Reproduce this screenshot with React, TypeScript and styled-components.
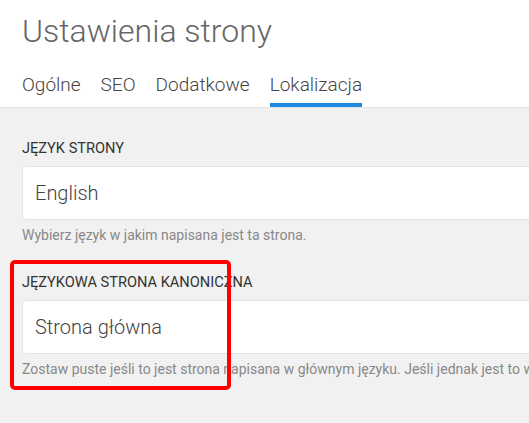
import styled, { createGlobalStyle } from "styled-components";

const GlobalStyle = createGlobalStyle`
  html, body {
    margin: 0;
    padding: 0;
    background: #f1f1f1;
    font-family: Roboto, "Liberation Sans", Arial, sans-serif;
    overflow: hidden;
  }
`;

const Page = styled.div`
  width: 529px;
  height: 423px;
  background: #f1f1f1;
  position: relative;
  overflow: hidden;
`;

const Header = styled.header`
  background: #fff;
  padding: 12px 22px 0;
  border-bottom: 1px solid #e2e2e2;
`;

const Title = styled.h1`
  margin: 0;
  font-size: 32px;
  line-height: 38px;
  font-weight: 300;
  color: #666;
`;

const Tabs = styled.nav`
  display: flex;
  gap: 20px;
  margin-top: 23px;
`;

const Tab = styled.span<{ active?: boolean }>`
  font-size: 19px;
  font-weight: 300;
  color: #444;
  line-height: 24px;
  padding-bottom: 6px;
  border-bottom: 4px solid ${({ active }) => (active ? "#1e88e5" : "transparent")};
`;

const Body = styled.main`
  padding: 31px 22px 0;
  display: flex;
  flex-direction: column;
  gap: 29px;
`;

const Field = styled.div`
  display: flex;
  flex-direction: column;
`;

const Label = styled.label`
  font-size: 14.6px;
  line-height: 18px;
  color: #333;
  text-transform: uppercase;
  margin-bottom: 9px;
`;

const Input = styled.div`
  height: 52px;
  width: 560px;
  box-sizing: content-box;
  background: #fff;
  border: 1px solid #e4e4e4;
  border-radius: 3px;
  display: flex;
  align-items: center;
  padding: 0 12px;
  font-size: 20px;
  font-weight: 300;
  color: #444;
`;

const Help = styled.p`
  margin: 7px 0 0;
  font-size: 14px;
  line-height: 17px;
  color: #888;
  white-space: nowrap;
`;

const Highlight = styled.div`
  position: absolute;
  left: 10px;
  top: 260px;
  width: 213px;
  height: 122px;
  border: 4px solid #ff0000;
  border-radius: 5px;
  pointer-events: none;
`;

export default function App() {
  return (
    <Page>
      <GlobalStyle />
      <Header>
        <Title>Ustawienia strony</Title>
        <Tabs>
          <Tab>Ogólne</Tab>
          <Tab>SEO</Tab>
          <Tab>Dodatkowe</Tab>
          <Tab active>Lokalizacja</Tab>
        </Tabs>
      </Header>
      <Body>
        <Field>
          <Label>Język strony</Label>
          <Input>English</Input>
          <Help>Wybierz język w jakim napisana jest ta strona.</Help>
        </Field>
        <Field>
          <Label>Językowa strona kanoniczna</Label>
          <Input>Strona główna</Input>
          <Help>
            Zostaw puste jeśli to jest strona napisana w głównym języku. Jeśli jednak jest to w
          </Help>
        </Field>
      </Body>
      <Highlight />
    </Page>
  );
}
